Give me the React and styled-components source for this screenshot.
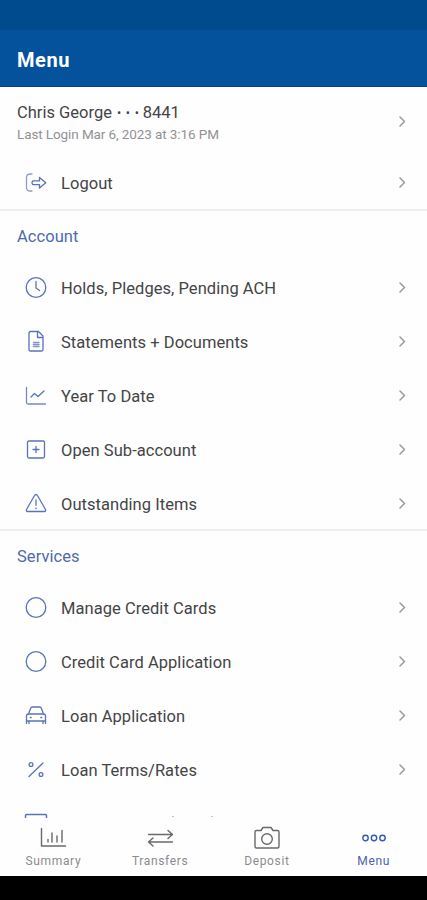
import React from 'react';
import styled, { createGlobalStyle } from 'styled-components';

const GlobalStyle = createGlobalStyle`
  * { box-sizing: border-box; }
  body { margin: 0; background: #fff; font-family: Roboto, 'Liberation Sans', sans-serif; }
`;

const Screen = styled.div`
  width: 427px;
  height: 900px;
  display: flex;
  flex-direction: column;
  overflow: hidden;
  background: #fefefe;
`;

const StatusBar = styled.div`
  flex: 0 0 30px;
  background: #004b8d;
`;

const Header = styled.header`
  flex: 0 0 57px;
  display: flex;
  align-items: center;
  padding: 3px 17px 0;
  background: #04529c;
  border-bottom: 1px solid #083f8c;
  color: #fff;
`;

const Title = styled.h1`
  margin: 0;
  font-size: 20px;
  line-height: 24px;
  font-weight: 700;
  letter-spacing: ${(p) => p.$spacing}px;
`;

const Content = styled.main`
  flex: 0 0 731px;
  overflow: hidden;
`;

const Section = styled.section`
  border-bottom: 2px solid #eeeef0;
  height: ${(p) => p.$height}px;
`;

const Profile = styled.div`
  height: 69px;
  padding: 0 17px;
  display: flex;
  align-items: center;
  justify-content: space-between;
`;

const ProfileText = styled.div`
  padding-top: 3px;
`;

const AccountName = styled.div`
  display: flex;
  align-items: center;
`;

const Mask = styled.span`
  margin: 0 3px 0 5px;
  font-size: 12.5px;
  line-height: 22px;
  letter-spacing: 0.8px;
  color: #444446;
`;

const Label = styled.span`
  display: block;
  width: max-content;
  font-size: ${(p) => p.$size || 16.5}px;
  line-height: ${(p) => p.$line || 22}px;
  letter-spacing: ${(p) => p.$spacing || 0}px;
  color: ${(p) => p.$color || '#444446'};
`;

const SectionTitle = styled.h2`
  margin: 0;
  height: 50px;
  padding: 0 17px;
  font-size: 16.5px;
  font-weight: 400;
  line-height: 52px;
  letter-spacing: ${(p) => p.$spacing}px;
  color: #4e69ae;
`;

const Row = styled.div`
  height: 54px;
  padding: 0 17px 0 24px;
  display: grid;
  grid-template-columns: 24px 1fr 16px;
  column-gap: 13px;
  align-items: center;

  & > span { padding-top: 1px; }
`;

const Svg = styled.svg`
  display: block;
  fill: none;
  stroke: ${(p) => p.$color || '#5873b8'};
  stroke-width: ${(p) => p.$stroke || 1.3};
  stroke-linecap: round;
  stroke-linejoin: round;
`;

const NextRow = styled(Row)`
  align-items: start;
  padding-top: 16px;
`;

const Ascenders = styled.div`
  display: flex;
  gap: 37px;
  padding: 3px 0 0 111px;
  &::before, &::after {
    content: '';
    width: 2px;
    height: 1px;
    background: #c4c4c6;
  }
`;

const TabBar = styled.nav`
  flex: 0 0 58px;
  display: grid;
  grid-template-columns: repeat(4, 1fr);
  background: #fefefe;
`;

const Tab = styled.div`
  display: flex;
  flex-direction: column;
  align-items: center;
  padding-top: 7px;
`;

const TabLabel = styled.span`
  font-size: 12px;
  line-height: 16px;
  letter-spacing: ${(p) => p.$spacing}px;
  color: ${(p) => (p.$active ? '#4b5fb5' : '#8b8b8d')};
`;

const SystemBar = styled.div`
  flex: 0 0 24px;
  background: #000;
`;

const icons = {
  logout: (
    <>
      <path d="M8 3H6Q2.500 3 2.500 6.500V16.500Q2.500 20 6 20H8" stroke="#8d9cce" />
      <path d="M9 9.800H15.500V6.500L21.800 11.800L15.500 17V13.700H9Q7 11.800 9 9.800Z" />
    </>
  ),
  clock: <><circle cx="12" cy="11.500" r="9.800" /><path d="M12 5.500V12L15.500 14.500" /></>,
  document: (
    <>
      <path d="M6.500 1.500H14.500L19 6V19.500Q19 21 17.500 21H6.500Q5 21 5 19.500V3Q5 1.500 6.500 1.500Z" />
      <path d="M13.500 2V7.500H18.500" />
      <path d="M9.500 12.500H15M9.500 14.500H15M9.500 16.500H15" strokeWidth="1.500" stroke="#8493cb" />
    </>
  ),
  trend: <><path d="M2.500 3.500V18.500Q2.500 20 4 20H21.500" stroke="#7788be" /><path d="M7 13L10.500 9.500L14 12.500L20 7" /></>,
  plus: <><rect x="3.500" y="3" width="17" height="17" rx="1.500" /><path d="M12 8.500V14.500M9 11.500H15" /></>,
  warning: <><path d="M12 2.500Q13 2.500 13.600 3.700L21.500 17.500Q22 19.500 20.500 19.500H3.500Q2 19.500 2.500 17.500L10.400 3.700Q11 2.500 12 2.500Z" /><path d="M12 8V13.300M12 16V16.500" /></>,
  circle: <circle cx="12" cy="11.500" r="9.800" />,
  car: (
    <>
      <path d="M4.500 10L6.500 4.500Q7 3 8.500 3H15.500Q17 3 17.500 4.500L19.500 10" />
      <path d="M2.500 19.500V12Q2.500 10 4.500 10H19.500Q21.500 10 21.500 12V19.500M2.500 17H21.500M5 17V19.500M19 17V19.500" />
      <path d="M6.500 13.500H7M17 13.500H17.500" strokeWidth="1.700" />
    </>
  ),
  percent: <><path d="M19 5L5 18.500" /><circle cx="7" cy="6.500" r="1.900" /><circle cx="17" cy="16.500" r="1.900" /></>,
  next: <path d="M1.500 5V2.500Q1.500 1.500 2.500 1.500H21.500Q22.500 1.500 22.500 2.500V5" strokeWidth="1.500" />,
};

const Icon = ({ name }) => (
  <Svg width="24" height="24" viewBox="0 0 24 24">{icons[name]}</Svg>
);

const Chevron = () => (
  <Svg width="16" height="16" viewBox="0 0 16 16" $color="#9a9a9c" $stroke={1.5}>
    <path d="M6 3L10.500 7.500L6 12" />
  </Svg>
);

const MenuItem = ({ icon, text, spacing = 0.05 }) => (
  <Row>
    <Icon name={icon} />
    <Label $spacing={spacing}>{text}</Label>
    <Chevron />
  </Row>
);

const accountItems = [
  ['clock', 'Holds, Pledges, Pending ACH'],
  ['document', 'Statements + Documents'],
  ['trend', 'Year To Date'],
  ['plus', 'Open Sub-account'],
  ['warning', 'Outstanding Items'],
];

const serviceItems = [
  ['circle', 'Manage Credit Cards'],
  ['circle', 'Credit Card Application'],
  ['car', 'Loan Application'],
  ['percent', 'Loan Terms/Rates'],
];

const tabs = [
  ['Summary', 0.65, <><path d="M2.500 2.500V20H26.500" /><path d="M9 13.500V16M13 7V16M18 10V16M23 4.500V16" /></>],
  ['Transfers', 0.65, <><path d="M2.500 8.500H26M22 4.500L26.500 8.500L22 12.500" /><path d="M26.500 16H3M7 12L2.500 16L7 20" /></>],
  ['Deposit', 0.65, <><path d="M3.500 4.500H8L10 1.500H18L20 4.500H24.500Q26 4.500 26 6V20.500Q26 22 24.500 22H3.500Q2 22 2 20.500V6Q2 4.500 3.500 4.500" /><circle cx="14" cy="13" r="5.300" /></>],
  ['Menu', 0.65, <><circle cx="5.500" cy="12" r="2.700" /><circle cx="14" cy="12" r="2.700" /><circle cx="22.500" cy="12" r="2.700" /></>],
];

export default function App() {
  return (
    <>
      <GlobalStyle />
      <Screen>
        <StatusBar />
        <Header><Title $spacing={0.55}>Menu</Title></Header>
        <Content>
          <Section $height={124}>
            <Profile>
              <ProfileText>
                <AccountName>
                  <Label>Chris George</Label>
                  <Mask>• • •</Mask>
                  <Label>8441</Label>
                </AccountName>
                <Label $size={13.5} $line={21} $color="#929294" $spacing={-0.1}>Last Login Mar 6, 2023 at 3:16 PM</Label>
              </ProfileText>
              <Chevron />
            </Profile>
            <MenuItem icon="logout" text="Logout" />
          </Section>
          <Section $height={320}>
            <SectionTitle $spacing={0.05}>Account</SectionTitle>
            {accountItems.map(([icon, text]) => <MenuItem key={text} icon={icon} text={text} />)}
          </Section>
          <SectionTitle $spacing={0.05}>Services</SectionTitle>
          {serviceItems.map(([icon, text]) => <MenuItem key={text} icon={icon} text={text} />)}
          <NextRow>
            <Icon name="next" />
            <Ascenders />
          </NextRow>
        </Content>
        <TabBar>
          {tabs.map(([text, spacing, drawing]) => (
            <Tab key={text}>
              <Svg width="28" height="28" viewBox="0 -1 28 28" $color={text === 'Menu' ? '#315aae' : '#69696b'} $stroke={1.4}>{drawing}</Svg>
              <TabLabel $spacing={spacing} $active={text === 'Menu'}>{text}</TabLabel>
            </Tab>
          ))}
        </TabBar>
        <SystemBar />
      </Screen>
    </>
  );
}
